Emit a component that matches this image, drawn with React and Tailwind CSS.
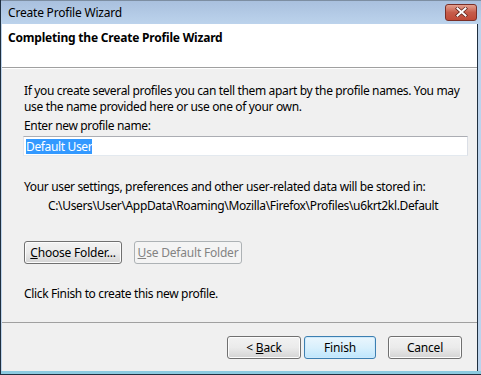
import React from 'react'

const font = { fontFamily: '"Noto Sans", "Open Sans", sans-serif' }

function Btn({ children, className = '', primary = false, disabled = false }) {
  const base = 'h-[23px] rounded-[3px] border flex items-center justify-center text-[12px] leading-[15px] tracking-[-0.2px]'
  const look = disabled
    ? 'border-[#adb2b5] bg-[#f4f4f4] text-[#838383]'
    : primary
      ? 'border-[#3c7fb1] bg-gradient-to-b from-[#eaf6fd] via-[#d9f0fc] to-[#bee6fd] text-black shadow-[inset_0_0_0_1px_#cfe9fa]'
      : 'border-[#707070] bg-gradient-to-b from-[#f2f2f2] via-[#ebebeb] to-[#d4d4d4] text-black shadow-[inset_0_0_0_1px_#fcfcfc]'
  return <div className={`${base} ${look} ${className}`}>{children}</div>
}

export default function App() {
  return (
    <div className="w-[481px] h-[375px] overflow-hidden bg-[#f0f0f0]" style={font}>
      <div className="h-full flex flex-col border-l border-b border-[#1f2f3f]">
        {/* title bar */}
        <div className="h-[24px] shrink-0 flex items-center justify-between pl-[7px] pr-[4px] bg-gradient-to-b from-[#a9c0de] to-[#bcd3ec] border-t border-[#7d8ea2]">
          <span className="text-[12px] leading-[15px] tracking-[-0.2px] text-black">Create Profile Wizard</span>
          <div className="w-[32px] h-[17px] mb-[1px] rounded-[3px] border border-[#7a2f27] bg-gradient-to-b from-[#e3a08f] via-[#c65c4a] to-[#c04a37] flex items-center justify-center">
            <svg width="13" height="10" viewBox="0 0 13 10">
              <path d="M2.5 1.5 L10.5 8.5 M10.5 1.5 L2.5 8.5" stroke="#5a2018" strokeWidth="3.4" strokeLinecap="square" />
              <path d="M2.5 1.5 L10.5 8.5 M10.5 1.5 L2.5 8.5" stroke="#ffffff" strokeWidth="2" strokeLinecap="square" />
            </svg>
          </div>
        </div>
        <div className="flex-1 min-h-0 flex flex-row">
          <div className="w-[1px] shrink-0 bg-[#bcd3ec]" />
          <div className="flex-1 min-w-0 flex flex-col bg-[#f0f0f0] border-r border-[#1f2f3f]">
            {/* header */}
            <div className="h-[44px] shrink-0 bg-white pl-[6px] pt-[6px] border-b border-[#a0a0a0]">
              <p className="text-[12px] leading-[15px] font-bold text-black tracking-[-0.2px]">Completing the Create Profile Wizard</p>
            </div>
            <div className="h-px shrink-0 bg-white" />
            {/* body */}
            <div className="flex-1 flex flex-col px-[22px] pt-[14px] text-[12px] text-black leading-[15px] tracking-[-0.35px] whitespace-nowrap">
              <p className="leading-[16px]">
                If you create several profiles you can tell them apart by the profile names. You may
                <br />
                use the name provided here or use one of your own.
              </p>
              <p className="mt-[3px]">Enter new profile name:</p>
              <div className="mt-[3px] h-[20px] w-[445px] -ml-[1px] bg-white border border-[#abadb3] border-l-[#e2e3ea] border-r-[#dbdfe6] border-b-[#e3e9ef] flex items-center pl-[2px]">
                <span className="bg-[#3399ff] text-white leading-[15px]">Default User</span>
              </div>
              <p className="mt-[23px]">Your user settings, preferences and other user-related data will be stored in:</p>
              <p className="mt-[4px] pl-[24px]">C:\Users\User\AppData\Roaming\Mozilla\Firefox\Profiles\u6krt2kl.Default</p>
              <div className="mt-[28px] flex gap-[12px]">
                <Btn className="w-[98px]"><span><u>C</u>hoose Folder...</span></Btn>
                <Btn className="w-[108px]" disabled><span><u>U</u>se Default Folder</span></Btn>
              </div>
              <p className="mt-[22px]">Click Finish to create this new profile.</p>
            </div>
            {/* footer */}
            <div className="h-[49px] shrink-0 border-t border-[#a0a0a0] flex items-start justify-end pt-[13px] pr-[15px]">
              <Btn className="w-[74px]"><span>&lt; <u>B</u>ack</span></Btn>
              <Btn className="w-[72px] ml-[3px]" primary>Finish</Btn>
              <Btn className="w-[74px] ml-[12px]">Cancel</Btn>
            </div>
          </div>
          <div className="w-[3px] shrink-0 bg-[#bcd3ec]" />
        </div>
        <div className="h-[3px] shrink-0 bg-[#8ccbe0]" />
      </div>
    </div>
  )
}
